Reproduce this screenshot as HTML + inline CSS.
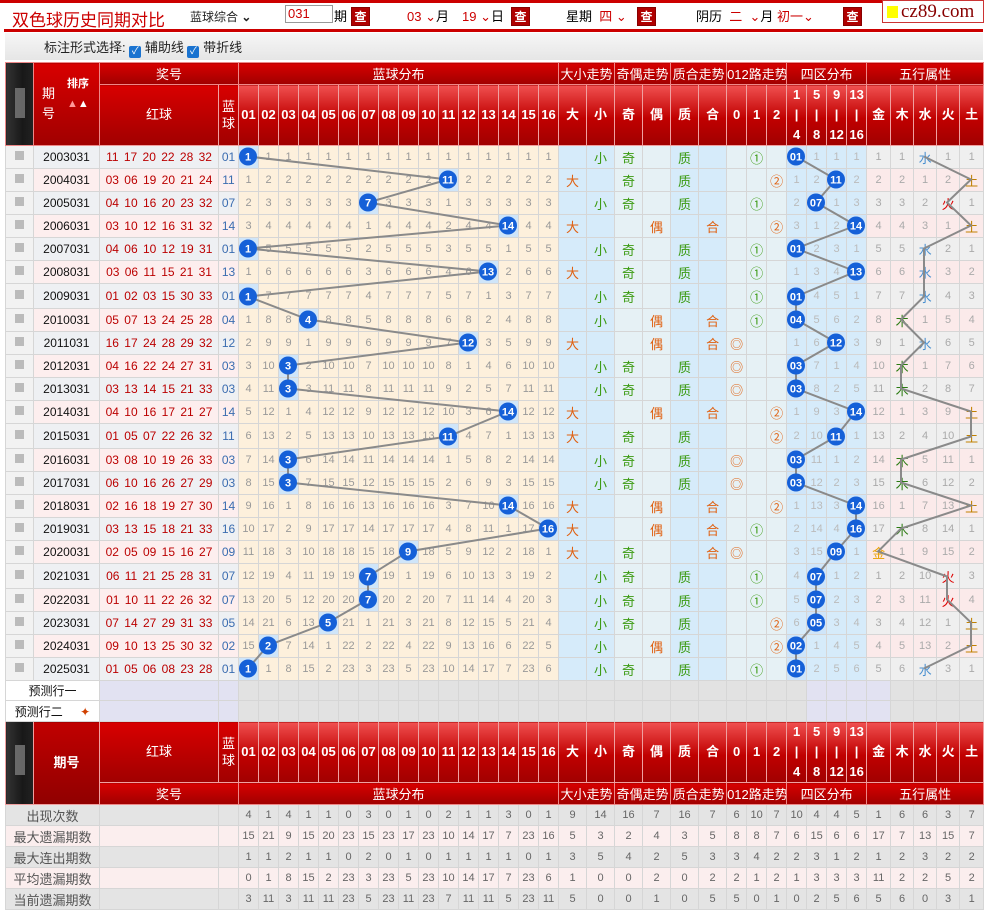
<!DOCTYPE html>
<html><head><meta charset="utf-8">
<style>
*{box-sizing:border-box}
body{margin:0;width:986px;height:909px;overflow:hidden;background:#fff;font-family:"Liberation Sans","Noto Sans CJK SC",sans-serif;font-size:12px;position:relative}
.a{position:absolute;white-space:nowrap}
.q{position:absolute;width:19px;height:19px;background:#b00000;color:#fff;font-size:12px;text-align:center;line-height:19px;border:1px solid #800;font-weight:bold}
.dd{color:#c00}
#t{position:absolute;left:5px;top:62px;border-collapse:collapse;table-layout:fixed;width:978px}
#t td{padding:0;text-align:center;border:1px solid #d6d6d6;overflow:hidden;white-space:nowrap}
tr.h1 td{background:linear-gradient(#d80000,#a00000);color:#fff;font-size:13px;border-color:#e88 !important;height:22px}
tr.h2 td{background:linear-gradient(#f05050,#c00000 55%,#a00000);color:#fff;font-size:13px;font-weight:bold;border-color:#f0a0a0 !important;height:61px;line-height:20px}
td.dk{background:linear-gradient(90deg,#333,#181818 60%,#222)!important;border-color:#555!important}
td.dk span{display:inline-block;width:10px;height:30px;background:#888;opacity:.7}
td.qh{background:linear-gradient(#d80000,#a00000)!important;font-weight:normal!important}
tr.d td{height:23px;font-size:11px;color:#999}
tr.s td{border-top:3px solid #c9c9c9;height:25px}
tr.d td:nth-child(1){background:#f2f2f2}
tr.d td:nth-child(1) i{display:inline-block;width:9px;height:9px;background:#bbb}
tr.d td:nth-child(2){color:#111;font-size:12px}
tr.d td:nth-child(3){color:#b00;font-size:12px;word-spacing:2px}
tr.d td:nth-child(4){color:#3a6cb0;font-size:12px}
tr.d td:nth-child(2),tr.d td:nth-child(3),tr.d td:nth-child(4){background:#eef0f3}
tr.d:nth-child(even) td:nth-child(2),tr.d:nth-child(even) td:nth-child(3),tr.d:nth-child(even) td:nth-child(4){background:#fdeeee}
tr.d td:nth-child(n+5):nth-child(-n+20){background:#fdf0dc}
tr.d td:nth-child(21),tr.d td:nth-child(22),tr.d td:nth-child(25),tr.d td:nth-child(26),tr.d td:nth-child(n+30):nth-child(-n+33){background:#d6ebfa;color:#bbb}
tr.d td:nth-child(23),tr.d td:nth-child(24),tr.d td:nth-child(n+27):nth-child(-n+29){background:#e6f1f5}
tr.d td:nth-child(n+34){background:#efefef;color:#aaa}
tr.d:nth-child(even) td:nth-child(n+34){background:#fbeaea}
tr.d td.b{background:#cfe5f9!important}
#t td.g{color:#3a9a10;font-size:13px}
#t td.o{color:#e06010;font-size:13px}
#t td.jin{color:#e8a000;font-size:13px}#t td.mu{color:#2a7a10;font-size:13px}#t td.sh{color:#4a90d0;font-size:13px}#t td.hu{color:#d00;font-size:13px}#t td.tu{color:#c08000;font-size:13px}
tr.p td{height:20px;background:#e2e2e2;border-color:#d8d8d8}
tr.p td.w{background:#fff;text-align:left;padding-left:22px;font-size:12px;color:#111}
tr.p td.l{background:#e2e2f2}
tr.st td{height:21px;font-size:11px;color:#666;background:#fbeeee}
tr.st:nth-child(even) td{background:#e4e4e4}
tr.st td.lb{font-size:13px;color:#555}
</style></head><body>
<div class="a" style="left:0;top:0;width:983px;height:3px;background:#c00"></div>
<div class="a" style="left:4px;top:29px;width:979px;height:3px;background:#c00"></div>
<div class="a" style="left:12px;top:6px;font-size:17px;color:#c00">双色球历史同期对比</div>
<div class="a" style="left:190px;top:8px;font-size:12px;color:#222">蓝球综合 <b>⌄</b></div>
<div class="a" style="left:285px;top:5px;width:48px;height:18px;border:1px solid #999;color:#c00;font-size:13px;padding-left:2px;line-height:16px">031</div>
<div class="a" style="left:334px;top:6px;font-size:13px">期</div>
<div class="q" style="left:351px;top:7px">查</div>
<div class="a" style="left:407px;top:6px;font-size:13px"><span class="dd">03 ⌄</span>月</div>
<div class="a" style="left:462px;top:6px;font-size:13px"><span class="dd">19 ⌄</span>日</div>
<div class="q" style="left:511px;top:7px">查</div>
<div class="a" style="left:566px;top:6px;font-size:13px">星期 <span class="dd">&nbsp;四 ⌄</span></div>
<div class="q" style="left:637px;top:7px">查</div>
<div class="a" style="left:696px;top:6px;font-size:13px">阴历 <span class="dd">&nbsp;二 &nbsp;⌄</span>月 <span class="dd">初一⌄</span></div>
<div class="q" style="left:843px;top:7px">查</div>
<div class="a" style="left:882px;top:0;width:102px;height:23px;border:1px solid #c33;background:#fff"><span style="position:absolute;left:4px;top:5px;width:11px;height:12px;background:#ff0"></span><span style="position:absolute;left:18px;top:0;font-family:'Liberation Serif',serif;font-size:19px;color:#800">cz89.com</span></div>
<div class="a" style="left:5px;top:33px;width:978px;height:27px;background:linear-gradient(#f6f6f6,#e6e6e6)"></div>
<div class="a" style="left:44px;top:37px;font-size:13px;color:#222">标注形式选择: <span style="display:inline-block;width:12px;height:12px;background:#1a73d0;border-radius:2px;vertical-align:-2px;color:#fff;font-size:10px;line-height:12px;text-align:center">✓</span> 辅助线 <span style="display:inline-block;width:12px;height:12px;background:#1a73d0;border-radius:2px;vertical-align:-2px;color:#fff;font-size:10px;line-height:12px;text-align:center">✓</span> 带折线</div>

<table id="t">
<colgroup><col style="width:28px"><col style="width:66px"><col style="width:119px"><col style="width:20px">
<col span="16" style="width:20px"><col span="6" style="width:28px"><col span="3" style="width:20px"><col span="4" style="width:20px"><col style="width:24px"><col span="3" style="width:23px"><col style="width:24px"></colgroup>
<tr class="h1"><td class="dk" rowspan="2"><span></span></td><td rowspan="2" style="background:linear-gradient(#d80000,#a00000);text-align:left;padding-left:8px;line-height:20px">期<br>号<span style="position:absolute;margin:-30px 0 0 12px;font-size:11px;font-weight:bold">排序<br><span style="color:#f99">▲</span>▲</span></td><td colspan="2">奖号</td><td colspan="16">蓝球分布</td><td colspan="2">大小走势</td><td colspan="2">奇偶走势</td><td colspan="2">质合走势</td><td colspan="3">012路走势</td><td colspan="4">四区分布</td><td colspan="5">五行属性</td></tr>
<tr class="h2"><td class="qh">红球</td><td class="qh" style="line-height:17px">蓝<br>球</td><td>01</td><td>02</td><td>03</td><td>04</td><td>05</td><td>06</td><td>07</td><td>08</td><td>09</td><td>10</td><td>11</td><td>12</td><td>13</td><td>14</td><td>15</td><td>16</td><td>大</td><td>小</td><td>奇</td><td>偶</td><td>质</td><td>合</td><td>0</td><td>1</td><td>2</td><td>1<br>|<br>4</td><td>5<br>|<br>8</td><td>9<br>|<br>12</td><td>13<br>|<br>16</td><td>金</td><td>木</td><td>水</td><td>火</td><td>土</td></tr>
<tr class="d"><td><i></i><td>2003031<td>11 17 20 22 28 32<td>01<td class=b><td>1<td>1<td>1<td>1<td>1<td>1<td>1<td>1<td>1<td>1<td>1<td>1<td>1<td>1<td>1<td><td class=g>小<td class=g>奇<td><td class=g>质<td><td><td class=g>①<td><td class=b><td>1<td>1<td>1<td>1<td>1<td class=sh>水<td>1<td>1</tr>
<tr class="d"><td><i></i><td>2004031<td>03 06 19 20 21 24<td>11<td>1<td>2<td>2<td>2<td>2<td>2<td>2<td>2<td>2<td>2<td class=b><td>2<td>2<td>2<td>2<td>2<td class=o>大<td><td class=g>奇<td><td class=g>质<td><td><td><td class=o>②<td>1<td>2<td class=b><td>2<td>2<td>2<td>1<td>2<td class=tu>土</tr>
<tr class="d"><td><i></i><td>2005031<td>04 10 16 20 23 32<td>07<td>2<td>3<td>3<td>3<td>3<td>3<td class=b><td>3<td>3<td>3<td>1<td>3<td>3<td>3<td>3<td>3<td><td class=g>小<td class=g>奇<td><td class=g>质<td><td><td class=g>①<td><td>2<td class=b><td>1<td>3<td>3<td>3<td>2<td class=hu>火<td>1</tr>
<tr class="d"><td><i></i><td>2006031<td>03 10 12 16 31 32<td>14<td>3<td>4<td>4<td>4<td>4<td>4<td>1<td>4<td>4<td>4<td>2<td>4<td>4<td class=b><td>4<td>4<td class=o>大<td><td><td class=o>偶<td><td class=o>合<td><td><td class=o>②<td>3<td>1<td>2<td class=b><td>4<td>4<td>3<td>1<td class=tu>土</tr>
<tr class="d"><td><i></i><td>2007031<td>04 06 10 12 19 31<td>01<td class=b><td>5<td>5<td>5<td>5<td>5<td>2<td>5<td>5<td>5<td>3<td>5<td>5<td>1<td>5<td>5<td><td class=g>小<td class=g>奇<td><td class=g>质<td><td><td class=g>①<td><td class=b><td>2<td>3<td>1<td>5<td>5<td class=sh>水<td>2<td>1</tr>
<tr class="d"><td><i></i><td>2008031<td>03 06 11 15 21 31<td>13<td>1<td>6<td>6<td>6<td>6<td>6<td>3<td>6<td>6<td>6<td>4<td>6<td class=b><td>2<td>6<td>6<td class=o>大<td><td class=g>奇<td><td class=g>质<td><td><td class=g>①<td><td>1<td>3<td>4<td class=b><td>6<td>6<td class=sh>水<td>3<td>2</tr>
<tr class="d s"><td><i></i><td>2009031<td>01 02 03 15 30 33<td>01<td class=b><td>7<td>7<td>7<td>7<td>7<td>4<td>7<td>7<td>7<td>5<td>7<td>1<td>3<td>7<td>7<td><td class=g>小<td class=g>奇<td><td class=g>质<td><td><td class=g>①<td><td class=b><td>4<td>5<td>1<td>7<td>7<td class=sh>水<td>4<td>3</tr>
<tr class="d"><td><i></i><td>2010031<td>05 07 13 24 25 28<td>04<td>1<td>8<td>8<td class=b><td>8<td>8<td>5<td>8<td>8<td>8<td>6<td>8<td>2<td>4<td>8<td>8<td><td class=g>小<td><td class=o>偶<td><td class=o>合<td><td class=g>①<td><td class=b><td>5<td>6<td>2<td>8<td class=mu>木<td>1<td>5<td>4</tr>
<tr class="d"><td><i></i><td>2011031<td>16 17 24 28 29 32<td>12<td>2<td>9<td>9<td>1<td>9<td>9<td>6<td>9<td>9<td>9<td>7<td class=b><td>3<td>5<td>9<td>9<td class=o>大<td><td><td class=o>偶<td><td class=o>合<td class=o>◎<td><td><td>1<td>6<td class=b><td>3<td>9<td>1<td class=sh>水<td>6<td>5</tr>
<tr class="d"><td><i></i><td>2012031<td>04 16 22 24 27 31<td>03<td>3<td>10<td class=b><td>2<td>10<td>10<td>7<td>10<td>10<td>10<td>8<td>1<td>4<td>6<td>10<td>10<td><td class=g>小<td class=g>奇<td><td class=g>质<td><td class=o>◎<td><td><td class=b><td>7<td>1<td>4<td>10<td class=mu>木<td>1<td>7<td>6</tr>
<tr class="d"><td><i></i><td>2013031<td>03 13 14 15 21 33<td>03<td>4<td>11<td class=b><td>3<td>11<td>11<td>8<td>11<td>11<td>11<td>9<td>2<td>5<td>7<td>11<td>11<td><td class=g>小<td class=g>奇<td><td class=g>质<td><td class=o>◎<td><td><td class=b><td>8<td>2<td>5<td>11<td class=mu>木<td>2<td>8<td>7</tr>
<tr class="d"><td><i></i><td>2014031<td>04 10 16 17 21 27<td>14<td>5<td>12<td>1<td>4<td>12<td>12<td>9<td>12<td>12<td>12<td>10<td>3<td>6<td class=b><td>12<td>12<td class=o>大<td><td><td class=o>偶<td><td class=o>合<td><td><td class=o>②<td>1<td>9<td>3<td class=b><td>12<td>1<td>3<td>9<td class=tu>土</tr>
<tr class="d s"><td><i></i><td>2015031<td>01 05 07 22 26 32<td>11<td>6<td>13<td>2<td>5<td>13<td>13<td>10<td>13<td>13<td>13<td class=b><td>4<td>7<td>1<td>13<td>13<td class=o>大<td><td class=g>奇<td><td class=g>质<td><td><td><td class=o>②<td>2<td>10<td class=b><td>1<td>13<td>2<td>4<td>10<td class=tu>土</tr>
<tr class="d"><td><i></i><td>2016031<td>03 08 10 19 26 33<td>03<td>7<td>14<td class=b><td>6<td>14<td>14<td>11<td>14<td>14<td>14<td>1<td>5<td>8<td>2<td>14<td>14<td><td class=g>小<td class=g>奇<td><td class=g>质<td><td class=o>◎<td><td><td class=b><td>11<td>1<td>2<td>14<td class=mu>木<td>5<td>11<td>1</tr>
<tr class="d"><td><i></i><td>2017031<td>06 10 16 26 27 29<td>03<td>8<td>15<td class=b><td>7<td>15<td>15<td>12<td>15<td>15<td>15<td>2<td>6<td>9<td>3<td>15<td>15<td><td class=g>小<td class=g>奇<td><td class=g>质<td><td class=o>◎<td><td><td class=b><td>12<td>2<td>3<td>15<td class=mu>木<td>6<td>12<td>2</tr>
<tr class="d"><td><i></i><td>2018031<td>02 16 18 19 27 30<td>14<td>9<td>16<td>1<td>8<td>16<td>16<td>13<td>16<td>16<td>16<td>3<td>7<td>10<td class=b><td>16<td>16<td class=o>大<td><td><td class=o>偶<td><td class=o>合<td><td><td class=o>②<td>1<td>13<td>3<td class=b><td>16<td>1<td>7<td>13<td class=tu>土</tr>
<tr class="d"><td><i></i><td>2019031<td>03 13 15 18 21 33<td>16<td>10<td>17<td>2<td>9<td>17<td>17<td>14<td>17<td>17<td>17<td>4<td>8<td>11<td>1<td>17<td class=b><td class=o>大<td><td><td class=o>偶<td><td class=o>合<td><td class=g>①<td><td>2<td>14<td>4<td class=b><td>17<td class=mu>木<td>8<td>14<td>1</tr>
<tr class="d"><td><i></i><td>2020031<td>02 05 09 15 16 27<td>09<td>11<td>18<td>3<td>10<td>18<td>18<td>15<td>18<td class=b><td>18<td>5<td>9<td>12<td>2<td>18<td>1<td class=o>大<td><td class=g>奇<td><td><td class=o>合<td class=o>◎<td><td><td>3<td>15<td class=b><td>1<td class=jin>金<td>1<td>9<td>15<td>2</tr>
<tr class="d s"><td><i></i><td>2021031<td>06 11 21 25 28 31<td>07<td>12<td>19<td>4<td>11<td>19<td>19<td class=b><td>19<td>1<td>19<td>6<td>10<td>13<td>3<td>19<td>2<td><td class=g>小<td class=g>奇<td><td class=g>质<td><td><td class=g>①<td><td>4<td class=b><td>1<td>2<td>1<td>2<td>10<td class=hu>火<td>3</tr>
<tr class="d"><td><i></i><td>2022031<td>01 10 11 22 26 32<td>07<td>13<td>20<td>5<td>12<td>20<td>20<td class=b><td>20<td>2<td>20<td>7<td>11<td>14<td>4<td>20<td>3<td><td class=g>小<td class=g>奇<td><td class=g>质<td><td><td class=g>①<td><td>5<td class=b><td>2<td>3<td>2<td>3<td>11<td class=hu>火<td>4</tr>
<tr class="d"><td><i></i><td>2023031<td>07 14 27 29 31 33<td>05<td>14<td>21<td>6<td>13<td class=b><td>21<td>1<td>21<td>3<td>21<td>8<td>12<td>15<td>5<td>21<td>4<td><td class=g>小<td class=g>奇<td><td class=g>质<td><td><td><td class=o>②<td>6<td class=b><td>3<td>4<td>3<td>4<td>12<td>1<td class=tu>土</tr>
<tr class="d"><td><i></i><td>2024031<td>09 10 13 25 30 32<td>02<td>15<td class=b><td>7<td>14<td>1<td>22<td>2<td>22<td>4<td>22<td>9<td>13<td>16<td>6<td>22<td>5<td><td class=g>小<td><td class=o>偶<td class=g>质<td><td><td><td class=o>②<td class=b><td>1<td>4<td>5<td>4<td>5<td>13<td>2<td class=tu>土</tr>
<tr class="d"><td><i></i><td>2025031<td>01 05 06 08 23 28<td>01<td class=b><td>1<td>8<td>15<td>2<td>23<td>3<td>23<td>5<td>23<td>10<td>14<td>17<td>7<td>23<td>6<td><td class=g>小<td class=g>奇<td><td class=g>质<td><td><td class=g>①<td><td class=b><td>2<td>5<td>6<td>5<td>6<td class=sh>水<td>3<td>1</tr>
<tr class="p"><td class="w" colspan="2">预测行一</td><td class=l><td class=l><td><td><td><td><td><td><td><td><td><td><td><td><td><td><td><td><td><td><td><td><td><td><td><td><td><td><td class=l><td class=l><td class=l><td class=l><td><td><td><td><td></tr>
<tr class="p"><td class="w" colspan="2" style="height:21px">预测行二 <span style="color:#d04000;margin-left:14px">✦</span></td><td class=l><td class=l><td><td><td><td><td><td><td><td><td><td><td><td><td><td><td><td><td><td><td><td><td><td><td><td><td><td><td class=l><td class=l><td class=l><td class=l><td><td><td><td><td></tr>
<tr class="h2"><td class="dk" rowspan="2"><span></span></td><td rowspan="2" style="background:linear-gradient(#c00000,#900000)">期号</td><td class="qh">红球</td><td class="qh" style="line-height:17px">蓝<br>球</td><td>01</td><td>02</td><td>03</td><td>04</td><td>05</td><td>06</td><td>07</td><td>08</td><td>09</td><td>10</td><td>11</td><td>12</td><td>13</td><td>14</td><td>15</td><td>16</td><td>大</td><td>小</td><td>奇</td><td>偶</td><td>质</td><td>合</td><td>0</td><td>1</td><td>2</td><td>1<br>|<br>4</td><td>5<br>|<br>8</td><td>9<br>|<br>12</td><td>13<br>|<br>16</td><td>金</td><td>木</td><td>水</td><td>火</td><td>土</td></tr>
<tr class="h1"><td colspan="2">奖号</td><td colspan="16">蓝球分布</td><td colspan="2">大小走势</td><td colspan="2">奇偶走势</td><td colspan="2">质合走势</td><td colspan="3">012路走势</td><td colspan="4">四区分布</td><td colspan="5">五行属性</td></tr>
<tr class="st"><td class=lb colspan=2>出现次数<td><td><td>4<td>1<td>4<td>1<td>1<td>0<td>3<td>0<td>1<td>0<td>2<td>1<td>1<td>3<td>0<td>1<td>9<td>14<td>16<td>7<td>16<td>7<td>6<td>10<td>7<td>10<td>4<td>4<td>5<td>1<td>6<td>6<td>3<td>7</tr>
<tr class="st"><td class=lb colspan=2>最大遗漏期数<td><td><td>15<td>21<td>9<td>15<td>20<td>23<td>15<td>23<td>17<td>23<td>10<td>14<td>17<td>7<td>23<td>16<td>5<td>3<td>2<td>4<td>3<td>5<td>8<td>8<td>7<td>6<td>15<td>6<td>6<td>17<td>7<td>13<td>15<td>7</tr>
<tr class="st"><td class=lb colspan=2>最大连出期数<td><td><td>1<td>1<td>2<td>1<td>1<td>0<td>2<td>0<td>1<td>0<td>1<td>1<td>1<td>1<td>0<td>1<td>3<td>5<td>4<td>2<td>5<td>3<td>3<td>4<td>2<td>2<td>3<td>1<td>2<td>1<td>2<td>3<td>2<td>2</tr>
<tr class="st"><td class=lb colspan=2>平均遗漏期数<td><td><td>0<td>1<td>8<td>15<td>2<td>23<td>3<td>23<td>5<td>23<td>10<td>14<td>17<td>7<td>23<td>6<td>1<td>0<td>0<td>2<td>0<td>2<td>2<td>1<td>2<td>1<td>3<td>3<td>3<td>11<td>2<td>2<td>5<td>2</tr>
<tr class="st"><td class=lb colspan=2>当前遗漏期数<td><td><td>3<td>11<td>3<td>11<td>11<td>23<td>5<td>23<td>11<td>23<td>7<td>11<td>11<td>5<td>23<td>11<td>5<td>0<td>0<td>1<td>0<td>5<td>5<td>0<td>1<td>0<td>2<td>5<td>6<td>5<td>6<td>0<td>3<td>1</tr>
</table>

<svg class="a" style="left:0;top:0" width="986" height="909" viewBox="0 0 986 909">
<g fill="none" stroke="#8a8a8a" stroke-width="2">
<polyline points="248,156.5 448,179.5 368,202.5 508,225.5 248,248.5 488,271.5 248,296.5 308,319.5 468,342.5 288,365.5 288,388.5 508,411.5 448,436.5 288,459.5 288,482.5 508,505.5 548,528.5 408,551.5 368,576.5 368,599.5 328,622.5 268,645.5 248,668.5"/>
<polyline points="796,156.5 836,179.5 816,202.5 856,225.5 796,248.5 856,271.5 796,296.5 796,319.5 836,342.5 796,365.5 796,388.5 856,411.5 836,436.5 796,459.5 796,482.5 856,505.5 856,528.5 836,551.5 816,576.5 816,599.5 816,622.5 796,645.5 796,668.5"/>
<polyline points="924,156.5 971,179.5 947,202.5 971,225.5 924,248.5 924,271.5 924,296.5 901,319.5 924,342.5 901,365.5 901,388.5 971,411.5 971,436.5 901,459.5 901,482.5 971,505.5 901,528.5 878,551.5 947,576.5 947,599.5 971,622.5 971,645.5 924,668.5"/>
</g>
<g fill="#1560d8" font-family="Liberation Sans,sans-serif" font-weight="bold" font-size="11" text-anchor="middle">
<circle cx="248" cy="156.5" r="9"/><circle cx="448" cy="179.5" r="9"/><circle cx="368" cy="202.5" r="9"/><circle cx="508" cy="225.5" r="9"/><circle cx="248" cy="248.5" r="9"/><circle cx="488" cy="271.5" r="9"/><circle cx="248" cy="296.5" r="9"/><circle cx="308" cy="319.5" r="9"/><circle cx="468" cy="342.5" r="9"/><circle cx="288" cy="365.5" r="9"/><circle cx="288" cy="388.5" r="9"/><circle cx="508" cy="411.5" r="9"/><circle cx="448" cy="436.5" r="9"/><circle cx="288" cy="459.5" r="9"/><circle cx="288" cy="482.5" r="9"/><circle cx="508" cy="505.5" r="9"/><circle cx="548" cy="528.5" r="9"/><circle cx="408" cy="551.5" r="9"/><circle cx="368" cy="576.5" r="9"/><circle cx="368" cy="599.5" r="9"/><circle cx="328" cy="622.5" r="9"/><circle cx="268" cy="645.5" r="9"/><circle cx="248" cy="668.5" r="9"/>
<circle cx="796" cy="156.5" r="9"/><circle cx="836" cy="179.5" r="9"/><circle cx="816" cy="202.5" r="9"/><circle cx="856" cy="225.5" r="9"/><circle cx="796" cy="248.5" r="9"/><circle cx="856" cy="271.5" r="9"/><circle cx="796" cy="296.5" r="9"/><circle cx="796" cy="319.5" r="9"/><circle cx="836" cy="342.5" r="9"/><circle cx="796" cy="365.5" r="9"/><circle cx="796" cy="388.5" r="9"/><circle cx="856" cy="411.5" r="9"/><circle cx="836" cy="436.5" r="9"/><circle cx="796" cy="459.5" r="9"/><circle cx="796" cy="482.5" r="9"/><circle cx="856" cy="505.5" r="9"/><circle cx="856" cy="528.5" r="9"/><circle cx="836" cy="551.5" r="9"/><circle cx="816" cy="576.5" r="9"/><circle cx="816" cy="599.5" r="9"/><circle cx="816" cy="622.5" r="9"/><circle cx="796" cy="645.5" r="9"/><circle cx="796" cy="668.5" r="9"/>
<g fill="#fff">
<text x="248" y="160.5">1</text><text x="448" y="183.5">11</text><text x="368" y="206.5">7</text><text x="508" y="229.5">14</text><text x="248" y="252.5">1</text><text x="488" y="275.5">13</text><text x="248" y="300.5">1</text><text x="308" y="323.5">4</text><text x="468" y="346.5">12</text><text x="288" y="369.5">3</text><text x="288" y="392.5">3</text><text x="508" y="415.5">14</text><text x="448" y="440.5">11</text><text x="288" y="463.5">3</text><text x="288" y="486.5">3</text><text x="508" y="509.5">14</text><text x="548" y="532.5">16</text><text x="408" y="555.5">9</text><text x="368" y="580.5">7</text><text x="368" y="603.5">7</text><text x="328" y="626.5">5</text><text x="268" y="649.5">2</text><text x="248" y="672.5">1</text>
<text x="796" y="160.5">01</text><text x="836" y="183.5">11</text><text x="816" y="206.5">07</text><text x="856" y="229.5">14</text><text x="796" y="252.5">01</text><text x="856" y="275.5">13</text><text x="796" y="300.5">01</text><text x="796" y="323.5">04</text><text x="836" y="346.5">12</text><text x="796" y="369.5">03</text><text x="796" y="392.5">03</text><text x="856" y="415.5">14</text><text x="836" y="440.5">11</text><text x="796" y="463.5">03</text><text x="796" y="486.5">03</text><text x="856" y="509.5">14</text><text x="856" y="532.5">16</text><text x="836" y="555.5">09</text><text x="816" y="580.5">07</text><text x="816" y="603.5">07</text><text x="816" y="626.5">05</text><text x="796" y="649.5">02</text><text x="796" y="672.5">01</text>
</g></g>
</svg>
</body></html>
